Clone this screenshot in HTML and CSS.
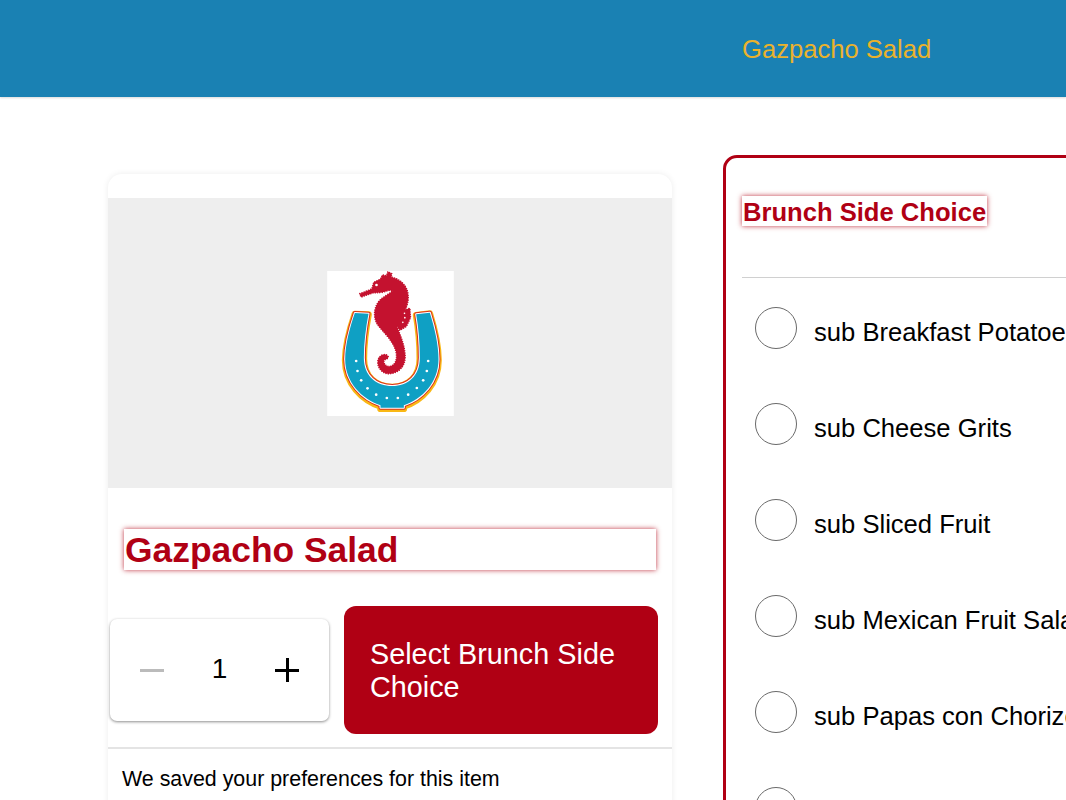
FILE: index.html
```html
<!DOCTYPE html>
<html>
<head>
	<meta charset="utf-8">
	<title>Gazpacho Salad</title>
	<link rel="stylesheet" href="styles.css">
</head>
<body>

<!-- top bar -->
<header class="topbar">
	<span class="topbarTitle">Gazpacho Salad</span>
</header>

<div class="page">

	<!-- item card -->
	<section class="card">
		<div class="cardImage">
			<svg class="logo" viewBox="80 60 380 435" role="img" aria-label="Seahorse and horseshoe logo">
				<rect x="80" y="60" width="380" height="435" fill="#fff"/>
				<defs>
					<path id="shoe" d="M163 186 L204 188 C196 230 190 275 190 320 C190 375 228 405 275 405 C322 405 358 375 358 320 C358 275 354 230 347 190 L388 185 C402 230 414 280 414 325 C414 395 365 445 310 463 L310 470 L240 470 L240 463 C185 445 134 395 134 325 C134 280 148 230 163 186 Z"/>
					<path id="horse" d="M178 128 L214 114 L220 94 L240 84 L246 72 L258 74 L262 62 L274 68 L272 78 C300 84 322 105 323 135 C324 150 320 165 314 176 L328 172 L330 200 L318 226 L298 238 L289 226 C298 250 314 285 314 318 C314 350 290 368 265 368 C245 368 230 350 232 330 C234 315 250 305 262 314 C266 320 258 326 252 326 C246 332 254 348 268 346 C284 344 292 325 286 300 C278 270 250 245 232 222 C220 205 218 178 232 155 C242 140 262 132 276 120 C268 114 258 122 246 124 C232 126 224 124 216 126 L182 138 Z"/>
				</defs>
				<use href="#shoe" transform="translate(0 3)" fill="#f9b815" stroke="#f9b815" stroke-width="20" stroke-linejoin="round"/>
				<use href="#shoe" fill="#d9301f" stroke="#d9301f" stroke-width="12" stroke-linejoin="round"/>
				<use href="#shoe" fill="#fff" stroke="#fff" stroke-width="6" stroke-linejoin="round"/>
				<use href="#shoe" fill="#0fa0c4"/>
				<g fill="#fff">
					<circle cx="167" cy="330" r="4"/><circle cx="171" cy="360" r="4"/><circle cx="182" cy="388" r="4"/>
					<circle cx="201" cy="412" r="4"/><circle cx="227" cy="431" r="4"/><circle cx="259" cy="441" r="4"/>
					<circle cx="292" cy="441" r="4"/><circle cx="323" cy="431" r="4"/><circle cx="349" cy="411" r="4"/>
					<circle cx="368" cy="388" r="4"/><circle cx="379" cy="360" r="4"/><circle cx="383" cy="330" r="4"/>
				</g>
				<use href="#horse" fill="#c4122f" stroke="#c4122f" stroke-width="5" stroke-linecap="round" stroke-dasharray="0 7"/>
				<circle cx="228" cy="102" r="4" fill="#fff"/>
				<g fill="#fff">
					<circle cx="312" cy="187" r="2.5"/><circle cx="313" cy="200" r="2.5"/><circle cx="307" cy="214" r="2.5"/>
				</g>
			</svg>
		</div>

		<h1 class="itemName">Gazpacho Salad</h1>

		<div class="orderRow">
			<div class="qty">
				<span class="qtyBtn qtyMinus"></span>
				<span class="qtyNum">1</span>
				<span class="qtyBtn qtyPlus"></span>
			</div>
			<a href="#" class="selectBtn">Select Brunch Side Choice</a>
		</div>

		<p class="saved">We saved your preferences for this item</p>
	</section>

	<!-- choices -->
	<section class="choices">
		<h2 class="choicesTitle">Brunch Side Choice</h2>
		<ul class="choiceList">
			<li><span class="radio"></span>sub Breakfast Potatoes</li>
			<li><span class="radio"></span>sub Cheese Grits</li>
			<li><span class="radio"></span>sub Sliced Fruit</li>
			<li><span class="radio"></span>sub Mexican Fruit Salad</li>
			<li><span class="radio"></span>sub Papas con Chorizo</li>
			<li><span class="radio"></span></li>
		</ul>
	</section>

</div>

</body>
</html>
```

FILE: styles.css
```css
* { margin:0; padding:0; box-sizing:border-box; }
html, body { width:1066px; height:800px; overflow:hidden; background:#fff; }
body { font-family:"Liberation Sans", Arial, sans-serif; color:#000; }

.topbar { height:97px; background:#1a81b3; display:flex; align-items:center; padding:2px 0 0 742px; box-shadow:0 1px 2px rgba(0,0,0,0.15); }
.topbarTitle { font-size:25.6px; color:#eab22c; }

.page { display:flex; align-items:flex-start; gap:51px; padding:58px 0 0 108px; width:1400px; }

.card { width:564px; flex:none; margin-top:19px; padding-top:24px; height:760px; background:#fff; border-radius:14px; box-shadow:0 0 6px rgba(0,0,0,0.08); }
.cardImage { height:290px; background:#eee; display:flex; align-items:center; justify-content:center; }
.logo { width:127px; height:145px; display:block; }

.itemName { margin:41px 16px 0; height:41px; padding-left:1px; font-size:35.4px; line-height:43px; font-weight:bold; color:#b00014; background:#fff; box-shadow:0 0 5px rgba(176,0,20,0.8); }

.orderRow { display:flex; align-items:center; gap:15px; margin:36px 14px 0 2px; }
.qty { width:219px; height:102px; flex:none; display:flex; align-items:center; justify-content:space-between; padding:0 30px; background:#fff; border-radius:7px; box-shadow:0 1px 3px rgba(0,0,0,0.45); }
.qtyNum { font-size:28px; line-height:28px; margin-top:-3px; }
.qtyBtn { width:24px; height:24px; position:relative; display:block; }
.qtyBtn::before { content:""; position:absolute; left:0; right:0; top:11px; height:3px; background:#000; }
.qtyMinus::before { background:#bbb; }
.qtyPlus::after { content:""; position:absolute; top:0; bottom:0; left:11px; width:3px; background:#000; }

.selectBtn { flex:1; height:128px; display:flex; align-items:center; padding:2px 26px 0; background:#b00014; border-radius:12px; color:#fff; font-size:28.8px; line-height:33px; text-decoration:none; }

.saved { margin-top:13px; padding-top:18px; border-top:2px solid #e4e4e4; padding-left:14px; font-size:21.4px; line-height:24px; }

.choices { width:600px; flex:none; height:760px; padding:38px 0 0 16px; border:3px solid #b00014; border-radius:14px; }
.choicesTitle { display:inline-block; height:30px; padding:0 1px; font-size:25.6px; line-height:32px; font-weight:bold; color:#b00014; background:#fff; box-shadow:0 0 5px rgba(176,0,20,0.8); }
.choiceList { list-style:none; margin-top:51px; border-top:1px solid #d0d0d0; padding-top:6px; }
.choiceList li { height:96px; display:flex; align-items:center; padding-left:13px; gap:17px; font-size:25.6px; }
.radio { width:42px; height:42px; flex:none; margin-bottom:8px; border:1.5px solid #6a6a6a; border-radius:50%; }
```
